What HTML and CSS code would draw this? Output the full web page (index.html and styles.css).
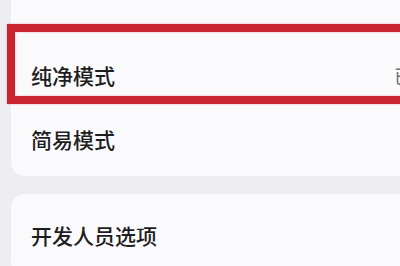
FILE: index.html
```html
<!DOCTYPE html>
<html lang="zh-CN">
<head>
<meta charset="utf-8">
<link rel="stylesheet" href="styles.css">
</head>
<body>
<div class="page">
  <div class="card card-first">
    <div class="row"><span class="label">纯净模式</span><span class="value">已关闭</span></div>
    <div class="row"><span class="label">简易模式</span></div>
  </div>
  <div class="card card-second">
    <div class="row"><span class="label">开发人员选项</span></div>
  </div>
  <div class="highlight"></div>
</div>
</body>
</html>
```
FILE: styles.css
```css
html, body {
  margin: 0;
  padding: 0;
  width: 400px;
  height: 266px;
  overflow: hidden;
  background: #eeeef2;
  font-family: "Noto Sans CJK SC", "Noto Sans", sans-serif;
}
.page {
  position: relative;
  display: flex;
  flex-direction: column;
  gap: 18px;
  padding-left: 11px;
  margin-top: -29px;
}
.card {
  width: 460px;
  background: #fafafc;
  border-radius: 14px;
  box-sizing: border-box;
}
.card-first {
  padding: 72px 0 5px;
}
.card-second {
  padding: 9px 0 8px;
}
.row {
  height: 64px;
  display: flex;
  align-items: center;
  padding: 0 20px;
}
.label {
  font-size: 21px;
  font-weight: 500;
  color: #1e1e22;
}
.value {
  margin-left: auto;
  font-size: 19px;
  color: #6f6f74;
}
.highlight {
  position: absolute;
  left: 7px;
  top: 53px;
  width: 460px;
  height: 80px;
  box-sizing: border-box;
  border: 8px solid #c8252e;
  box-shadow: 0 0 2px rgba(220, 90, 100, 0.5), inset 0 0 2px rgba(220, 90, 100, 0.5);
}
```
